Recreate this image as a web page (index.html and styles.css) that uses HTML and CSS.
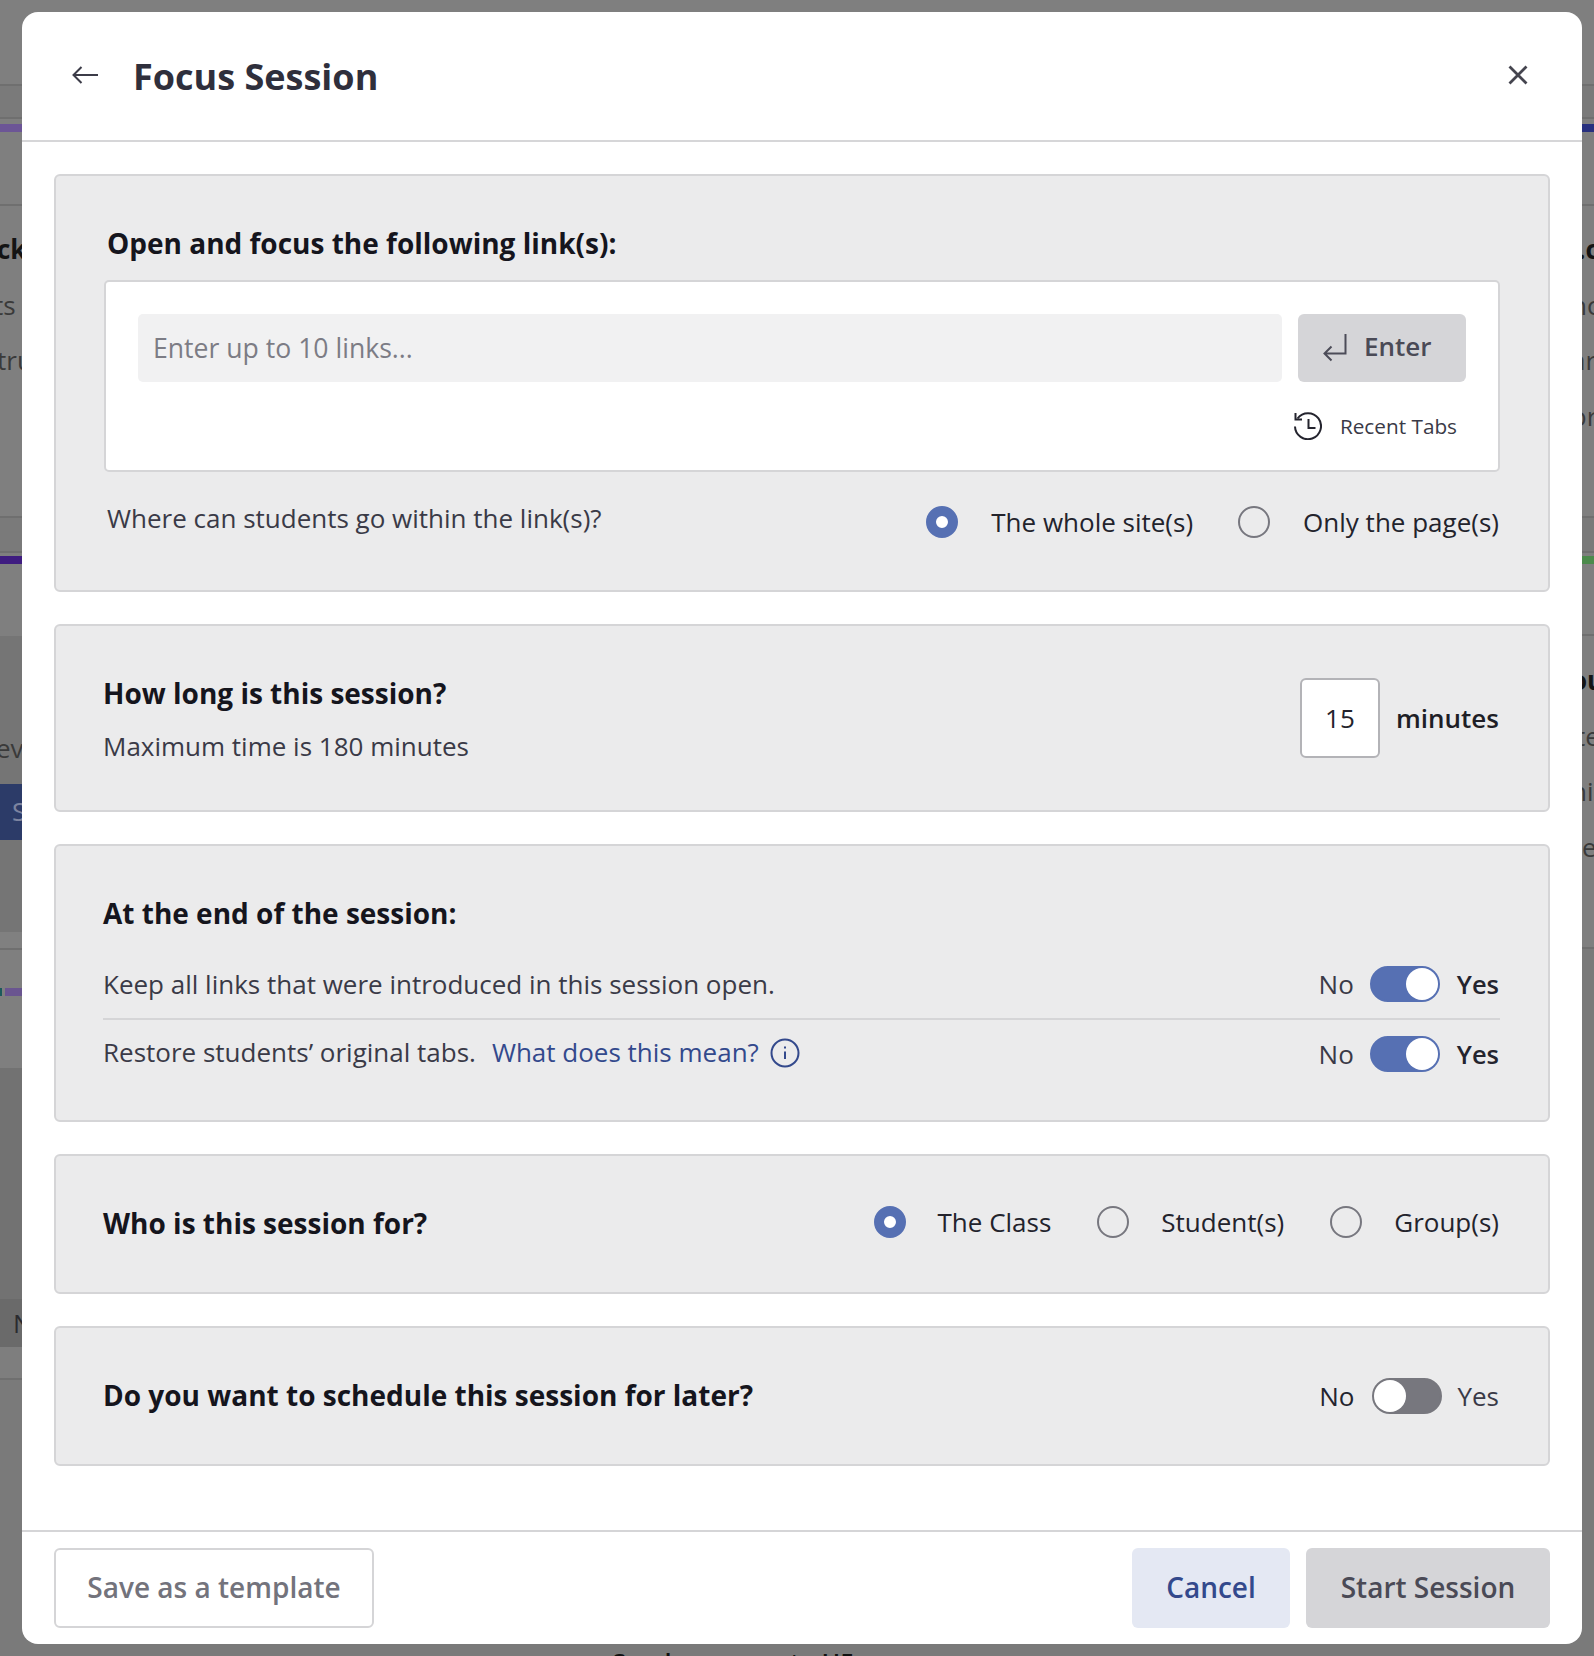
FILE: index.html
```html
<!DOCTYPE html>
<html lang="en">
<head>
<meta charset="utf-8">
<title>Focus Session</title>
<link rel="stylesheet" href="styles.css">
</head>
<body>
<div class="backdrop">
  <div class="bg-col bg-left">
    <div class="bg-band l-a"></div>
    <div class="bg-band l-b"></div>
    <div class="bg-band l-c"><div class="bar bar-purple"></div></div>
    <div class="bg-band l-d"><p class="frag bold">ck</p><p class="frag ts">ts A</p><p class="frag">tru</p></div>
    <div class="bg-band l-e"></div>
    <div class="bg-band l-f"><div class="bar bar-indigo"></div></div>
    <div class="bg-band l-g"><p class="frag ev">ev</p><div class="bg-blue">S</div></div>
    <div class="bg-band l-h"></div>
    <div class="bg-band l-i"><div class="bar-split"><span class="bar-teal"></span><span class="bar-violet"></span></div></div>
    <div class="bg-band l-j"></div>
    <div class="bg-band l-k">N</div>
    <div class="bg-band l-l"></div>
    <div class="bg-band l-m"><p class="bottom-text">Send message to H5</p></div>
  </div>
  <div class="bg-col bg-right">
    <div class="bg-band l-a"></div>
    <div class="bg-band l-b"></div>
    <div class="bg-band l-c"><div class="bar bar-blue"></div></div>
    <div class="bg-band l-d"><p class="frag r dot bold">.c</p><p class="frag r">nc</p><p class="frag r">ar</p><p class="frag r">or</p></div>
    <div class="bg-band l-e"></div>
    <div class="bg-band r-f"><div class="bar bar-green"></div></div>
    <div class="bg-band r-g"><p class="frag r bold">ou</p><p class="frag r te">te</p><p class="frag r">ni</p><p class="frag r lone">e</p></div>
  </div>
</div>

<section class="modal" role="dialog" aria-labelledby="modal-title">
  <header class="modal-head">
    <button class="icon-btn back" aria-label="Back">
      <svg class="ico-back" viewBox="0 0 26 18" fill="none" stroke="#3c3c48" stroke-width="2"><path d="M26 9H1.5M9.500 1 1.500 9l8 8"/></svg>
    </button>
    <h1 class="modal-title" id="modal-title">Focus Session</h1>
    <button class="icon-btn close" aria-label="Close">
      <svg class="ico-close" viewBox="0 0 20 20" fill="none" stroke="#45454f" stroke-width="2.800"><path d="M1.500 1.500l17 17M18.500 1.500l-17 17"/></svg>
    </button>
  </header>

  <div class="modal-body">
    <section class="card card-links">
      <h2 class="heading heading-links">Open and focus the following link(s):</h2>
      <div class="link-box">
        <div class="link-row">
          <div class="link-input">Enter up to 10 links...</div>
          <button class="enter-btn">
            <svg class="ico-enter" viewBox="0 0 24 28" fill="none" stroke="#4c4c58" stroke-width="2"><path d="M22.500 0v19.500H1.500M8.500 12.500l-7 7 7 7"/></svg>
            <span class="enter-label">Enter</span>
          </button>
        </div>
        <div class="recent">
          <svg class="ico-history" viewBox="0 0 28 28" fill="none" stroke="#24242e" stroke-width="2"><path d="M3.500 6.500A13 13 0 1 1 1 14.500"/><path d="M1.500 1v6.500H8"/><path d="M14.500 7v9h7"/></svg>
          <span class="recent-label">Recent Tabs</span>
        </div>
      </div>
      <div class="scope-row">
        <p class="body-text scope-q">Where can students go within the link(s)?</p>
        <div class="radio-group scope-radios">
          <label class="radio-item"><span class="radio on"></span><span class="radio-label">The whole site(s)</span></label>
          <label class="radio-item"><span class="radio"></span><span class="radio-label">Only the page(s)</span></label>
        </div>
      </div>
    </section>

    <section class="card card-time">
      <div class="time-copy">
        <h2 class="heading">How long is this session?</h2>
        <p class="body-text max">Maximum time is 180 minutes</p>
      </div>
      <div class="time-field">
        <div class="time-input">15</div>
        <span class="minutes">minutes</span>
      </div>
    </section>

    <section class="card card-end">
      <h2 class="heading">At the end of the session:</h2>
      <div class="end-row first">
        <p class="body-text">Keep all links that were introduced in this session open.</p>
        <div class="switch-group"><span class="sw-no">No</span><span class="switch on"></span><span class="sw-yes strong">Yes</span></div>
      </div>
      <div class="end-row second">
        <p class="body-text restore">Restore students’ original tabs.<a class="link" href="#">What does this mean?</a>
          <svg class="ico-info" viewBox="0 0 30 30" fill="none" stroke="#33498c" stroke-width="2"><circle cx="15" cy="15" r="13.500"/><path d="M15 13.500v7.500M15 8.500v2"/></svg>
        </p>
        <div class="switch-group"><span class="sw-no">No</span><span class="switch on"></span><span class="sw-yes strong">Yes</span></div>
      </div>
    </section>

    <section class="card card-row">
      <h2 class="heading row-heading">Who is this session for?</h2>
      <div class="radio-group who-radios">
        <label class="radio-item"><span class="radio on"></span><span class="radio-label">The Class</span></label>
        <label class="radio-item"><span class="radio"></span><span class="radio-label">Student(s)</span></label>
        <label class="radio-item"><span class="radio"></span><span class="radio-label">Group(s)</span></label>
      </div>
    </section>

    <section class="card card-row">
      <h2 class="heading row-heading">Do you want to schedule this session for later?</h2>
      <div class="switch-group off-group"><span class="sw-no strong">No</span><span class="switch"></span><span class="sw-yes">Yes</span></div>
    </section>
  </div>

  <footer class="modal-foot">
    <button class="btn btn-outline">Save as a template</button>
    <div class="foot-right">
      <button class="btn btn-cancel">Cancel</button>
      <button class="btn btn-start">Start Session</button>
    </div>
  </footer>
</section>
</body>
</html>
```

FILE: styles.css
```css
* { box-sizing: border-box; }
html, body { margin: 0; padding: 0; }
body {
  width: 1594px;
  height: 1656px;
  overflow: hidden;
  position: relative;
  font-family: "Open Sans", "Noto Sans", sans-serif;
  color: #3a3a47;
  background: #7f7f7f;
}
p, h1, h2 { margin: 0; }
button { font-family: inherit; border: 0; padding: 0; background: none; }

/* dimmed page behind the dialog */
.backdrop { display: grid; grid-template-columns: 797px 797px; height: 1656px; overflow: hidden; }
.bg-col { display: flex; flex-direction: column; min-width: 0; }
.bg-left { position: relative; z-index: 1; }
.bg-band { flex: none; border-bottom: 0 solid #6f6f6f; }
.l-a { height: 86px; border-bottom-width: 2px; }
.l-b { height: 33px; background: #7a7a7a; border-bottom-width: 2px; }
.l-c { height: 87px; border-bottom-width: 2px; padding-top: 5px; }
.l-d { height: 312px; border-bottom-width: 2px; padding-top: 16px; }
.l-e { height: 35px; background: #7a7a7a; border-bottom-width: 2px; }
.l-f { height: 83px; padding-top: 3px; }
.l-g { height: 296px; background: #757575; padding-top: 85px; }
.l-h { height: 18px; background: #808080; border-bottom-width: 2px; }
.l-i { height: 118px; padding-top: 38px; }
.l-j { height: 231px; background: #727272; }
.l-k { height: 48px; background: #6a6a6a; color: #2b2b2f; font-size: 26px; line-height: 48px; padding-left: 13px; }
.l-l { height: 33px; background: #7e7e7e; border-bottom-width: 2px; }
.l-m { flex: 1; background: #7a7a7a; padding: 267px 0 0 612px; }
.r-f { height: 83px; padding-top: 3px; border-bottom-width: 2px; }
.r-g { flex: 1; padding-top: 17px; background: linear-gradient(#7f7f7f 0, #7f7f7f 311px, #6f6f6f 311px, #6f6f6f 313px, #7a7a7a 313px); }

.bar { height: 8px; }
.bar-purple { background: #6c5596; }
.bar-indigo { background: #3f1c80; }
.bar-blue { background: #28307f; }
.bar-green { background: #4c8a4c; }
.bar-split { display: flex; gap: 3px; height: 8px; }
.bar-teal { width: 2px; background: #1b5a5c; }
.bar-violet { flex: 1; background: #6a5590; }

.frag { font-size: 26px; line-height: 55.500px; color: #3a3a3a; white-space: nowrap; margin-left: -3px; }
.frag.bold { font-weight: 700; color: #141414; }
.frag.ts { margin-left: -6px; }
.frag.r { margin-left: 774px; }
.frag.dot { margin-left: 781px; }
.frag.te { margin-left: 779px; }
.frag.lone { margin-left: 785px; }
.ev { margin-left: -4px; }
.bg-blue { height: 56px; margin-top: 7px; background: #2c3b68; color: #7d84a0; font-size: 26px; line-height: 54px; padding-left: 12px; }
.bottom-text { font-size: 25px; font-weight: 600; line-height: 30px; color: #111; white-space: nowrap; }

/* dialog */
.modal {
  position: absolute;
  z-index: 2;
  left: 22px;
  top: 12px;
  width: 1560px;
  height: 1632px;
  background: #fff;
  border-radius: 16px;
  display: flex;
  flex-direction: column;
}
.modal-head {
  flex: none;
  height: 130px;
  border-bottom: 2px solid #d6d6d8;
  display: flex;
  align-items: center;
  padding: 0 54px 2px 50px;
}
.icon-btn { display: flex; }
.ico-back { width: 26px; height: 18px; }
.ico-close { width: 20px; height: 20px; }
.modal-title { margin-left: 35px; font-size: 36px; line-height: 48px; font-weight: 700; color: #2f2f3c; margin-top: 4px; flex: 1; }

.modal-body { flex: 1; padding: 32px 32px 0 32px; display: flex; flex-direction: column; gap: 32px; }
.card {
  flex: none;
  background: #ebebec;
  border: 2px solid #d5d5d7;
  border-radius: 6px;
}
.heading { font-size: 28px; line-height: 36px; font-weight: 700; color: #15151d; }
.body-text { font-size: 26px; line-height: 36px; color: #3a3a47; }

.card-links { height: 418px; padding: 49px 48px 0 48px; }
.heading-links { padding-left: 3px; }
.link-box {
  margin-top: 19px;
  height: 192px;
  background: #fff;
  border: 2px solid #d5d5d7;
  border-radius: 5px;
  padding: 32px 32px 0 32px;
}
.link-row { display: flex; gap: 16px; height: 68px; }
.link-input {
  flex: 1;
  background: #f1f1f2;
  border-radius: 5px;
  padding: 0 15px;
  font-size: 26.600px;
  line-height: 69px;
  color: #7c7c85;
}
.enter-btn {
  width: 168px;
  background: #d5d5d8;
  border-radius: 6px;
  display: flex;
  align-items: center;
  gap: 17px;
  padding: 0 0 0 25px;
  font-size: 26px;
  font-weight: 600;
  color: #4a4a56;
}
.enter-label { margin-top: -4px; }
.ico-enter { width: 24px; height: 28px; }
.recent { display: flex; align-items: center; justify-content: flex-end; margin-top: 30px; padding-right: 9px; }
.ico-history { width: 28px; height: 28px; }
.recent-label { margin-left: 18px; font-size: 20.750px; font-weight: 500; line-height: 28px; color: #3a3a47; }

.scope-row { display: flex; justify-content: space-between; margin-top: 32px; }
.scope-q { padding-left: 3px; margin-top: -4px; }
.radio-group { display: flex; color: #1f1f28; }
.scope-radios { gap: 45px; margin-right: 1px; }
.who-radios { gap: 46px; margin-bottom: 4px; }
.radio-item { display: flex; align-items: center; }
.radio-label { font-size: 26px; line-height: 36px; margin-left: 33px; color: #23232c; }
.who-radios .radio-label { margin-left: 32px; }
.radio {
  flex: none;
  width: 32px;
  height: 32px;
  border-radius: 50%;
  border: 2px solid #77777f;
}
.radio.on { background: #fff; border: 10px solid #5670b3; }

.card-time { height: 188px; display: flex; align-items: center; justify-content: space-between; padding: 0 49px 0 47px; }
.time-copy { padding-top: 3px; }
.max { margin-top: 17px; }
.time-field { display: flex; align-items: center; gap: 16px; }
.time-input {
  width: 80px;
  height: 80px;
  background: #fff;
  border: 2px solid #b3b3b7;
  border-radius: 6px;
  text-align: center;
  font-size: 26px;
  line-height: 76px;
  color: #23232c;
}
.minutes { font-size: 26px; font-weight: 600; color: #1e1e26; }

.card-end { height: 278px; padding: 49px 48px 0 47px; }
.end-row { display: flex; align-items: center; justify-content: space-between; }
.first { margin-top: 35px; padding-bottom: 16px; border-bottom: 2px solid #d5d5d7; height: 54px; }
.second { margin-top: 16px; height: 36px; }
.restore { display: flex; align-items: center; margin-top: -4px; }
.link { margin-left: 16px; color: #33498c; text-decoration: none; }
.ico-info { width: 30px; height: 30px; margin: 2px 0 0 11px; }

.switch-group { display: flex; align-items: center; margin-right: 1px; font-size: 26px; line-height: 36px; color: #3a3a47; }
.strong { font-weight: 500; color: #24242e; }
.sw-yes.strong { font-size: 25.500px; font-weight: 600; }
.switch {
  position: relative;
  width: 70px;
  height: 36px;
  margin: 0 17px 0 16px;
  border-radius: 18px;
  background: #77777e;
  border: 2px solid #77777e;
}
.off-group .switch { margin: 0 15px 0 18px; }
.switch.on { background: #5670b3; border-color: #5670b3; }
.switch::after {
  content: "";
  position: absolute;
  top: 0;
  left: 0;
  width: 32px;
  height: 32px;
  border-radius: 50%;
  background: #fff;
}
.switch.on::after { left: 34px; }

.card-row { height: 140px; display: flex; align-items: center; justify-content: space-between; padding: 0 49px 0 47px; }
.card-row .switch-group { margin-right: 0; }
.row-heading { margin-bottom: 2px; }

.modal-foot {
  flex: none;
  height: 114px;
  border-top: 2px solid #d5d5d7;
  display: flex;
  justify-content: space-between;
  padding: 16px 32px 0 32px;
}
.foot-right { display: flex; gap: 16px; }
.btn { height: 80px; padding-bottom: 2px; border-radius: 6px; font-size: 28px; font-weight: 600; }
.btn-outline { width: 320px; background: #fff; border: 2px solid #d5d5d7; color: #73737c; }
.btn-cancel { width: 158px; background: #e4e8f3; color: #33498c; }
.btn-start { width: 244px; background: #d5d5d8; color: #4a4a56; }
```
